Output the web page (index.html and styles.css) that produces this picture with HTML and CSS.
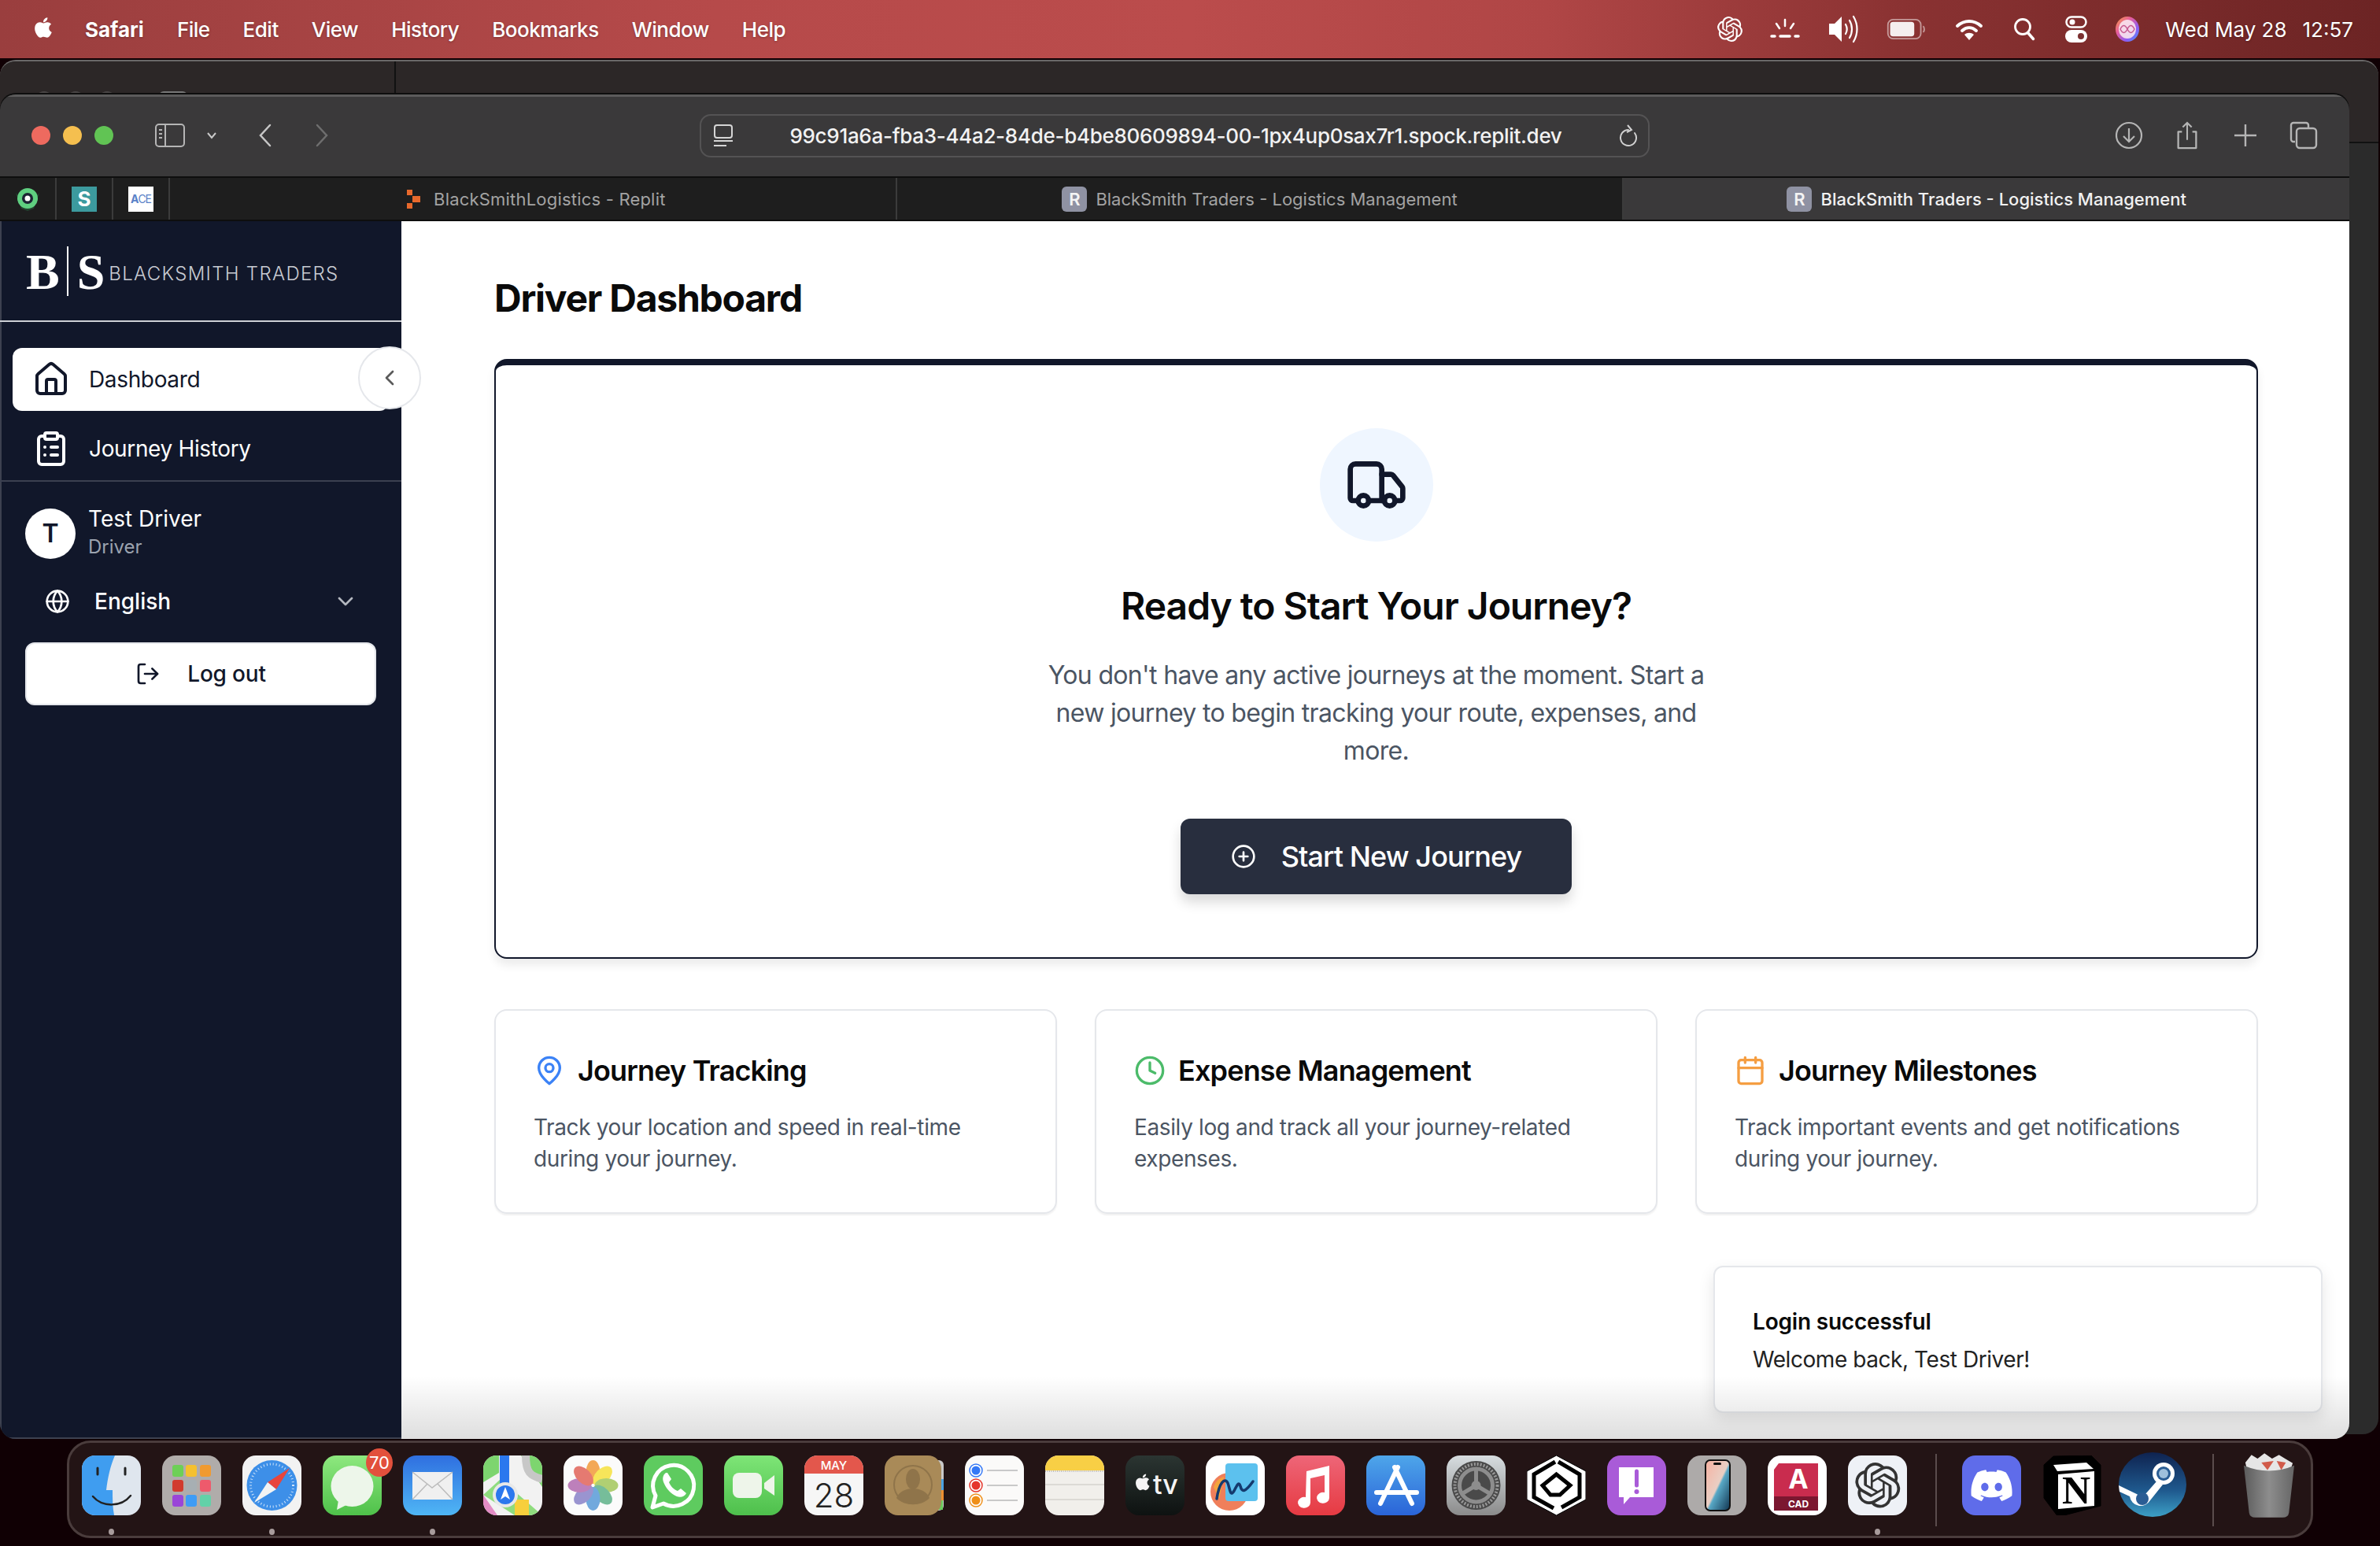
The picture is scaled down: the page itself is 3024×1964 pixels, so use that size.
FILE: index.html
```html
<!DOCTYPE html>
<html lang="en">
<head>
<meta charset="utf-8">
<title>BlackSmith Traders - Logistics Management</title>
<link rel="stylesheet" href="styles.css">
</head>
<body>
<div class="desktop">
  <header class="menubar">
    <svg class="apple" viewBox="0 0 24 24"><path fill="#fff" d="M17.05 20.28c-.98.95-2.05.8-3.08.35-1.09-.46-2.09-.48-3.24 0-1.44.62-2.2.44-3.06-.35C2.79 15.25 3.51 7.59 9.05 7.31c1.35.07 2.29.74 3.08.8 1.18-.24 2.31-.93 3.57-.84 1.51.12 2.65.72 3.4 1.8-3.12 1.87-2.38 5.98.48 7.13-.57 1.5-1.31 2.99-2.54 4.09zM12.03 7.25c-.15-2.23 1.66-4.07 3.74-4.25.29 2.58-2.34 4.5-3.74 4.25z"/></svg>
    <nav class="menu">
      <span class="menu-app">Safari</span><span>File</span><span>Edit</span><span>View</span><span>History</span><span>Bookmarks</span><span>Window</span><span>Help</span>
    </nav>
    <div class="status">
      <svg class="st st-gpt" viewBox="0 0 24 24"><path fill="#fff" d="M22.2819 9.8211a5.9847 5.9847 0 0 0-.5157-4.9108 6.0462 6.0462 0 0 0-6.5098-2.9A6.0651 6.0651 0 0 0 4.9807 4.1818a5.9847 5.9847 0 0 0-3.9977 2.9 6.0462 6.0462 0 0 0 .7427 7.0966 5.98 5.98 0 0 0 .511 4.9107 6.051 6.051 0 0 0 6.5146 2.9001A5.9847 5.9847 0 0 0 13.2599 24a6.0557 6.0557 0 0 0 5.7718-4.2058 5.9894 5.9894 0 0 0 3.9977-2.9001 6.0557 6.0557 0 0 0-.7475-7.0729zm-9.022 12.6081a4.4755 4.4755 0 0 1-2.8764-1.0408l.1419-.0804 4.7783-2.7582a.7948.7948 0 0 0 .3927-.6813v-6.7369l2.02 1.1686a.071.071 0 0 1 .038.052v5.5826a4.504 4.504 0 0 1-4.4945 4.4944zm-9.6607-4.1254a4.4708 4.4708 0 0 1-.5346-3.0137l.142.0852 4.783 2.7582a.7712.7712 0 0 0 .7806 0l5.8428-3.3685v2.3324a.0804.0804 0 0 1-.0332.0615L9.74 19.9502a4.4992 4.4992 0 0 1-6.1408-1.6464zM2.3408 7.8956a4.485 4.485 0 0 1 2.3655-1.9728V11.6a.7664.7664 0 0 0 .3879.6765l5.8144 3.3543-2.0201 1.1685a.0757.0757 0 0 1-.071 0l-4.8303-2.7865A4.504 4.504 0 0 1 2.3408 7.872zm16.5963 3.8558L13.1038 8.364 15.1192 7.2a.0757.0757 0 0 1 .071 0l4.8303 2.7913a4.4944 4.4944 0 0 1-.6765 8.1042v-5.6772a.79.79 0 0 0-.407-.667zm2.0107-3.0231l-.142-.0852-4.7735-2.7818a.7759.7759 0 0 0-.7854 0L9.409 9.2297V6.8974a.0662.0662 0 0 1 .0284-.0615l4.8303-2.7866a4.4992 4.4992 0 0 1 6.6802 4.66zM8.3065 12.863l-2.02-1.1638a.0804.0804 0 0 1-.038-.0567V6.0742a4.4992 4.4992 0 0 1 7.3757-3.4537l-.142.0805L8.704 5.459a.7948.7948 0 0 0-.3927.6813zm1.0976-2.3654l2.602-1.4998 2.6069 1.4998v2.9994l-2.5974 1.4997-2.6067-1.4997Z"/></svg>
      <svg class="st st-bright" viewBox="0 0 38 30"><g stroke="#fff" stroke-width="2.5" stroke-linecap="round"><path d="M19 3v8M8 8l4 6M30 8l-4 6"/><path d="M2 24h4M13 24h12M32 24h4" stroke-width="3.5"/></g></svg>
      <svg class="st st-sound" viewBox="0 0 40 38"><path fill="#fff" d="M2 12h7l9-9v32l-9-9H2z"/><g fill="none" stroke="#fff" stroke-width="2.2" stroke-linecap="round"><path d="M23 13c2 3.500 2 8.500 0 12"/><path d="M28 8c4 6.500 4 15.500 0 22"/><path d="M33 3c6 10 6 22 0 32"/></g></svg>
      <svg class="st st-batt" viewBox="0 0 52 28"><rect x="1" y="1" width="45" height="26" rx="7" fill="none" stroke="#fff" stroke-opacity=".5" stroke-width="2"/><rect x="4" y="4" width="33" height="20" rx="4" fill="#f5eeee"/><path d="M49 10c2 1 2.500 7 0 8" fill="none" stroke="#fff" stroke-opacity=".5" stroke-width="2"/></svg>
      <svg class="st st-wifi" viewBox="0 0 36 28"><g fill="none" stroke="#fff" stroke-width="4" stroke-linecap="round"><path d="M3 10c9-8 21-8 30 0"/><path d="M9 16c5.500-5 12.500-5 18 0"/></g><path fill="#fff" d="M18 28l-6-7c3.500-3 8.500-3 12 0z"/></svg>
      <svg class="st st-search" viewBox="0 0 28 30"><circle cx="12" cy="12" r="9.500" fill="none" stroke="#fff" stroke-width="2.800"/><path d="M18.500 19.500l7 8" stroke="#fff" stroke-width="3.500" stroke-linecap="round"/></svg>
      <svg class="st st-cc" viewBox="0 0 28 34"><rect x="1.500" y="1.500" width="25" height="13" rx="6.500" fill="none" stroke="#fff" stroke-width="2.500"/><circle cx="9" cy="8" r="3.500" fill="#fff"/><rect y="18" width="28" height="16" rx="8" fill="#fff"/><circle cx="20" cy="26" r="4" fill="#7b3030"/></svg>
      <svg class="st st-siri" viewBox="0 0 30 32"><defs><linearGradient id="siri" x1="0" y1="0" x2="1" y2="1"><stop offset="0" stop-color="#f7a13b"/><stop offset=".35" stop-color="#e85d9c"/><stop offset=".7" stop-color="#8b5cf6"/><stop offset="1" stop-color="#3ba7f7"/></linearGradient></defs><ellipse cx="15" cy="16" rx="15" ry="16" fill="url(#siri)"/><ellipse cx="15" cy="16" rx="11" ry="12" fill="#f8e6f0" opacity=".9"/><path d="M6 16c3-6 6-6 9 0s6 6 9 0c-3-6-6-6-9 0s-6 6-9 0z" fill="none" stroke="#c65a90" stroke-width="1.500"/></svg>
      <span class="clock">Wed May 28</span><span class="clock">12:57</span>
    </div>
  </header>

  <div class="back-window">
    <div class="back-toolbar">
      <i class="back-light"></i><i class="back-light"></i><i class="back-light"></i>
      <svg class="back-side" viewBox="0 0 36 30"><rect x="1" y="1" width="34" height="28" rx="5" fill="none" stroke="#777" stroke-width="2"/><path d="M1 10h34" stroke="#777" stroke-width="2"/></svg>
      <span class="back-rule"></span>
      <span class="back-title">ChatGPT</span>
    </div>
  </div>

  <section class="window">
    <div class="toolbar">
      <div class="lights"><i class="light red"></i><i class="light yellow"></i><i class="light green"></i></div>
      <svg class="tb-side" viewBox="0 0 38 30"><rect x="1" y="1" width="36" height="28" rx="4" fill="none" stroke="#b5b5b5" stroke-width="2"/><path d="M13 1v28" stroke="#b5b5b5" stroke-width="2"/><path d="M5 8h4M5 13h4M5 18h4" stroke="#b5b5b5" stroke-width="2"/></svg>
      <svg class="tb-chev" viewBox="0 0 14 10"><path d="M2 2l5 6 5-6" fill="none" stroke="#c9c9c9" stroke-width="2"/></svg>
      <svg class="tb-nav" viewBox="0 0 18 30"><path d="M15 2L3 15l12 13" fill="none" stroke="#c6c6c6" stroke-width="2.500" stroke-linecap="round"/></svg>
      <svg class="tb-nav tb-next" viewBox="0 0 18 30"><path d="M3 2l12 13L3 28" fill="none" stroke="#6e6e6e" stroke-width="2.500" stroke-linecap="round"/></svg>
      <div class="urlbar">
        <svg class="url-ico" viewBox="0 0 24 28"><rect x="1" y="1" width="22" height="16" rx="3" fill="none" stroke="#d5d5d5" stroke-width="2"/><path d="M0 21h24M0 27h16" stroke="#d5d5d5" stroke-width="2"/></svg>
        <span class="url-text">99c91a6a-fba3-44a2-84de-b4be80609894-00-1px4up0sax7r1.spock.replit.dev</span>
        <svg class="url-reload" viewBox="0 0 24 30"><path d="M20 12a10 10 0 1 1-8-4" fill="none" stroke="#d0d0d0" stroke-width="2" stroke-linecap="round"/><path d="M11 2l5 6-6 3" fill="none" stroke="#d0d0d0" stroke-width="2"/></svg>
      </div>
      <div class="tb-actions">
        <svg class="tb-a" viewBox="0 0 36 36"><circle cx="18" cy="18" r="16" fill="none" stroke="#b5b5b5" stroke-width="2.200"/><path d="M18 9v17M11 19l7 7 7-7" fill="none" stroke="#b5b5b5" stroke-width="2.200"/></svg>
        <svg class="tb-a" viewBox="0 0 36 38"><path d="M11 14H6v22h24V14h-5" fill="none" stroke="#b5b5b5" stroke-width="2.400" stroke-linejoin="round"/><path d="M18 25V2M12 8l6-6 6 6" fill="none" stroke="#b5b5b5" stroke-width="2.200"/></svg>
        <svg class="tb-a" viewBox="0 0 36 36"><path d="M18 4v28M4 18h28" stroke="#b5b5b5" stroke-width="2.400"/></svg>
        <svg class="tb-a" viewBox="0 0 36 36"><path d="M7 26H5a3 3 0 0 1-3-3V5a3 3 0 0 1 3-3h16a3 3 0 0 1 3 3v3" fill="none" stroke="#b5b5b5" stroke-width="2.400"/><rect x="9" y="9" width="25" height="25" rx="4" fill="none" stroke="#b5b5b5" stroke-width="2.400"/></svg>
      </div>
    </div>

    <div class="tabbar">
      <div class="pin"><svg class="pin-ico" viewBox="0 0 32 32"><path d="M1 8l7 20 8 3 8-3 7-20-8 9H9z" fill="#2b7a4c" opacity=".4"/><circle cx="16" cy="15" r="13" fill="#5fcf80"/><circle cx="16" cy="15" r="7" fill="#1c2333"/><circle cx="16" cy="15" r="3.500" fill="#fff"/></svg></div>
      <div class="pin"><span class="pin-s">S</span></div>
      <div class="pin"><span class="pin-ace"><b>A</b>CE</span></div>
      <div class="tab tab-first"><svg class="tab-ico-r" viewBox="0 0 20 24"><path fill="#e8692c" d="M1 0h7v7H1zM8 8h10v8H8zM1 17h7v7H1z"/></svg><span>BlackSmithLogistics - Replit</span></div>
      <div class="tab"><span class="tab-ico">R</span><span>BlackSmith Traders - Logistics Management</span></div>
      <div class="tab tab-active"><span class="tab-ico">R</span><span>BlackSmith Traders - Logistics Management</span></div>
    </div>

    <div class="app">
      <aside class="sidebar">
        <div class="brand">
          <span class="brand-mark">B</span><span class="brand-rule"></span><span class="brand-mark">S</span>
          <span class="brand-name">BLACKSMITH TRADERS</span>
        </div>
        <nav class="side-nav">
          <a class="side-item side-item-active">
            <svg class="ico48" viewBox="0 0 24 24"><path d="M15 21v-8a1 1 0 0 0-1-1h-4a1 1 0 0 0-1 1v8"/><path d="M3 10a2 2 0 0 1 .709-1.528l7-5.999a2 2 0 0 1 2.582 0l7 5.999A2 2 0 0 1 21 10v9a2 2 0 0 1-2 2H5a2 2 0 0 1-2-2z"/></svg>
            <span>Dashboard</span>
          </a>
          <a class="side-item">
            <svg class="ico48" viewBox="0 0 24 24"><rect x="8" y="2" width="8" height="4" rx="1"/><path d="M16 4h2a2 2 0 0 1 2 2v14a2 2 0 0 1-2 2H6a2 2 0 0 1-2-2V6a2 2 0 0 1 2-2h2"/><path d="M12 11h4M12 16h4M8 11h.01M8 16h.01"/></svg>
            <span>Journey History</span>
          </a>
        </nav>
        <div class="side-foot">
          <div class="user">
            <span class="avatar">T</span>
            <div class="user-text"><div class="user-name">Test Driver</div><div class="user-role">Driver</div></div>
          </div>
          <div class="lang">
            <svg class="ico32" viewBox="0 0 24 24"><circle cx="12" cy="12" r="10"/><path d="M12 2a14.5 14.5 0 0 0 0 20 14.5 14.5 0 0 0 0-20"/><path d="M2 12h20"/></svg>
            <span class="lang-name">English</span>
            <svg class="ico32 lang-chev" viewBox="0 0 24 24"><path d="m6 9 6 6 6-6"/></svg>
          </div>
          <button class="logout">
            <svg class="ico32" viewBox="0 0 24 24"><path d="M9 21H5a2 2 0 0 1-2-2V5a2 2 0 0 1 2-2h4"/><path d="m16 17 5-5-5-5"/><path d="M21 12H9"/></svg>
            <span>Log out</span>
          </button>
        </div>
        <button class="collapse"><svg class="ico32" viewBox="0 0 24 24"><path d="m15 18-6-6 6-6"/></svg></button>
      </aside>

      <main class="main">
        <h1 class="page-title">Driver Dashboard</h1>
        <section class="hero">
          <div class="hero-badge"><svg class="hero-truck" viewBox="0 0 24 24"><path d="M14 18V6a2 2 0 0 0-2-2H4a2 2 0 0 0-2 2v11a1 1 0 0 0 1 1h2"/><path d="M15 18H9"/><path d="M19 18h2a1 1 0 0 0 1-1v-3.650a1 1 0 0 0-.22-.624l-3.480-4.350A1 1 0 0 0 17.520 8H14"/><circle cx="17" cy="18" r="2"/><circle cx="7" cy="18" r="2"/></svg></div>
          <h2 class="hero-title">Ready to Start Your Journey?</h2>
          <p class="hero-text">You don't have any active journeys at the moment. Start a new journey to begin tracking your route, expenses, and more.</p>
          <button class="cta">
            <svg class="ico32" viewBox="0 0 24 24"><circle cx="12" cy="12" r="10"/><path d="M8 12h8M12 8v8"/></svg>
            <span>Start New Journey</span>
          </button>
        </section>
        <section class="features">
          <article class="feature">
            <h3 class="feature-title"><svg class="ico40 blue" viewBox="0 0 24 24"><path d="M20 10c0 6-8 12-8 12s-8-6-8-12a8 8 0 0 1 16 0Z"/><circle cx="12" cy="10" r="3"/></svg>Journey Tracking</h3>
            <p class="feature-text">Track your location and speed in real-time during your journey.</p>
          </article>
          <article class="feature">
            <h3 class="feature-title"><svg class="ico40 greenc" viewBox="0 0 24 24"><circle cx="12" cy="12" r="10"/><path d="M12 6v6l4 2"/></svg>Expense Management</h3>
            <p class="feature-text">Easily log and track all your journey-related expenses.</p>
          </article>
          <article class="feature">
            <h3 class="feature-title"><svg class="ico40 orange" viewBox="0 0 24 24"><path d="M8 2v4M16 2v4"/><rect x="3" y="4" width="18" height="18" rx="2"/><path d="M3 10h18"/></svg>Journey Milestones</h3>
            <p class="feature-text">Track important events and get notifications during your journey.</p>
          </article>
        </section>
        <div class="toast">
          <div class="toast-title">Login successful</div>
          <div class="toast-text">Welcome back, Test Driver!</div>
        </div>
        <div class="dock-shade"></div>
      </main>
    </div>
  </section>

  <footer class="dock">
    <div class="dock-app"><svg viewBox="0 0 75 76"><rect width="75" height="76" rx="17" fill="#dfe6ee"/><path d="M17 0h25c-6 14-9 28-11 44h8c0 10 0 22 2 32H17A17 17 0 0 1 0 59V17A17 17 0 0 1 17 0z" fill="#3f9df0"/><path d="M20 16v8M55 16v8" stroke="#222" stroke-width="3" stroke-linecap="round"/><path d="M14 52c12 14 36 14 48-1" fill="none" stroke="#222" stroke-width="2.500" stroke-linecap="round"/></svg><i class="dot"></i></div>
    <div class="dock-app"><svg viewBox="0 0 75 76"><rect width="75" height="76" rx="17" fill="#b0acaa"/><g><rect x="13" y="12" width="14" height="15" rx="3" fill="#6dd056"/><rect x="30" y="12" width="14" height="15" rx="3" fill="#f5c02f"/><rect x="48" y="12" width="14" height="15" rx="3" fill="#f09a30"/><rect x="13" y="31" width="14" height="15" rx="3" fill="#d13b2e"/><rect x="30" y="31" width="14" height="15" rx="3" fill="#a7afb3"/><rect x="48" y="31" width="14" height="15" rx="3" fill="#ee5a6c"/><rect x="13" y="50" width="14" height="15" rx="3" fill="#9a45d8"/><rect x="30" y="50" width="14" height="15" rx="3" fill="#3f9cf5"/><rect x="48" y="50" width="14" height="15" rx="3" fill="#62d1a8"/></g></svg></div>
    <div class="dock-app"><svg viewBox="0 0 75 76"><rect width="75" height="76" rx="17" fill="#f2f2f2"/><circle cx="37.500" cy="38" r="32" fill="#3d8fe8"/><circle cx="37.500" cy="38" r="27" fill="none" stroke="#cfe4fa" stroke-width="3" stroke-dasharray="1 3"/><path d="M60 16L32 34l11 9z" fill="#e8453c"/><path d="M15 60l28-17-11-9z" fill="#f3f3f3"/></svg><i class="dot"></i></div>
    <div class="dock-app"><svg viewBox="0 0 75 76"><defs><linearGradient id="msg" x1="0" y1="0" x2="0" y2="1"><stop offset="0" stop-color="#8ee87f"/><stop offset="1" stop-color="#4fc14a"/></linearGradient></defs><rect width="75" height="76" rx="17" fill="url(#msg)"/><ellipse cx="37.500" cy="39" rx="27" ry="26" fill="#edf6ea"/><path d="M20 57l-2 12 14-7z" fill="#edf6ea"/></svg><span class="badge">70</span></div>
    <div class="dock-app"><svg viewBox="0 0 75 76"><defs><linearGradient id="mail" x1="0" y1="0" x2="0" y2="1"><stop offset="0" stop-color="#2f6fe0"/><stop offset="1" stop-color="#4fb6f5"/></linearGradient></defs><rect width="75" height="76" rx="17" fill="url(#mail)"/><rect x="12" y="21" width="51" height="35" rx="2" fill="#f0f0f0"/><path d="M12 21l25 20 26-20M12 56l19-20M63 56L44 36" fill="none" stroke="#bcbcbc" stroke-width="1.500"/></svg><i class="dot"></i></div>
    <div class="dock-app"><svg viewBox="0 0 75 76"><defs><clipPath id="mapclip"><rect width="75" height="76" rx="17"/></clipPath></defs><g clip-path="url(#mapclip)"><rect width="75" height="76" fill="#f2f2f2"/><path d="M48 0h27v40z" fill="#7dd56f"/><path d="M0 0h20v22L0 34z" fill="#7dd56f"/><path d="M22 30L75 76H40L0 50z" fill="#8fdc7e"/><path d="M0 50l18 26H0z" fill="#e38cc5"/><path d="M40 56h18v20H40z" fill="#f7cf3c"/><path d="M21 0h12v36H21z" fill="#2b78ee"/><path d="M54 0c0 22 6 26 21 30" fill="none" stroke="#c7c7c7" stroke-width="10"/><circle cx="28" cy="50" r="16" fill="#e8e8e8"/><circle cx="28" cy="50" r="12" fill="#2b78ee"/><path d="M28 40l6 16-6-4-6 4z" fill="#fff"/></g></svg></div>
    <div class="dock-app"><svg viewBox="0 0 75 76"><rect width="75" height="76" rx="17" fill="#fbfbfb"/><g opacity=".85"><ellipse cx="37.500" cy="21" rx="9" ry="15" fill="#f29a3b"/><ellipse cx="37.500" cy="21" rx="9" ry="15" fill="#f7e23e" transform="rotate(45 37.500 38)"/><ellipse cx="37.500" cy="21" rx="9" ry="15" fill="#a3c85c" transform="rotate(90 37.500 38)"/><ellipse cx="37.500" cy="21" rx="9" ry="15" fill="#5fb38a" transform="rotate(135 37.500 38)"/><ellipse cx="37.500" cy="21" rx="9" ry="15" fill="#5a9bd8" transform="rotate(180 37.500 38)"/><ellipse cx="37.500" cy="21" rx="9" ry="15" fill="#8a83c9" transform="rotate(225 37.500 38)"/><ellipse cx="37.500" cy="21" rx="9" ry="15" fill="#b36bb0" transform="rotate(270 37.500 38)"/><ellipse cx="37.500" cy="21" rx="9" ry="15" fill="#e2645a" transform="rotate(315 37.500 38)"/></g></svg></div>
    <div class="dock-app"><svg viewBox="0 0 75 76"><rect width="75" height="76" rx="17" fill="#5ecb5f"/><path d="M11 66l4-15a26 26 0 1 1 10 10z" fill="none" stroke="#fff" stroke-width="5" stroke-linejoin="round"/><path d="M28 22c-4 3-5 8-2 14 3 7 9 13 16 16 5 2 10 0 12-4l-7-6-4 3c-5-2-9-6-11-11l3-4-5-8z" fill="#fff"/></svg></div>
    <div class="dock-app"><svg viewBox="0 0 75 76"><defs><linearGradient id="ft" x1="0" y1="0" x2="0" y2="1"><stop offset="0" stop-color="#7ee577"/><stop offset="1" stop-color="#4ebf4c"/></linearGradient></defs><rect width="75" height="76" rx="17" fill="url(#ft)"/><rect x="11" y="22" width="37" height="32" rx="8" fill="#eef5ea"/><path d="M51 35l13-10v26L51 42z" fill="#eef5ea"/></svg></div>
    <div class="dock-app"><svg viewBox="0 0 75 76"><rect width="75" height="76" rx="17" fill="#f6f6f6"/><path d="M0 23V17A17 17 0 0 1 17 0h41a17 17 0 0 1 17 17v6z" fill="#e3574c"/><text class="t-may" x="37.500" y="18" text-anchor="middle">MAY</text><text class="t-28" x="37.500" y="66" text-anchor="middle">28</text></svg></div>
    <div class="dock-app"><svg viewBox="0 0 75 76"><rect x="62" y="6" width="13" height="64" rx="6" fill="#c9c9c9"/><rect x="64" y="30" width="11" height="14" fill="#4ba3e3"/><rect x="64" y="44" width="11" height="13" fill="#ee8f30"/><rect x="64" y="57" width="10" height="12" fill="#6acb5d"/><rect width="72" height="76" rx="17" fill="#a98a58"/><circle cx="36" cy="37" r="24" fill="none" stroke="#8f744a" stroke-width="2"/><ellipse cx="36" cy="30" rx="9" ry="13" fill="#8f744a"/><path d="M15 54c6-16 36-16 42 0-10 11-32 11-42 0z" fill="#8f744a"/></svg></div>
    <div class="dock-app"><svg viewBox="0 0 75 76"><rect width="75" height="76" rx="17" fill="#fbfaf9"/><circle cx="14" cy="19" r="8" fill="#fff" stroke="#3478f6" stroke-width="1.500"/><circle cx="14" cy="19" r="5.500" fill="#3478f6"/><circle cx="14" cy="38" r="8" fill="#fff" stroke="#e5352b" stroke-width="1.500"/><circle cx="14" cy="38" r="5.500" fill="#e5352b"/><circle cx="14" cy="57" r="8" fill="#fff" stroke="#ef8f18" stroke-width="1.500"/><circle cx="14" cy="57" r="5.500" fill="#ef8f18"/><path d="M28 19h39M28 38h39M28 57h39" stroke="#c9c9c9" stroke-width="2"/></svg></div>
    <div class="dock-app"><svg viewBox="0 0 75 76"><rect width="75" height="76" rx="17" fill="#f1efeb"/><path d="M0 19V17A17 17 0 0 1 17 0h41a17 17 0 0 1 17 17v2z" fill="#f8cf45"/><path d="M0 20h75" stroke="#bdbab4" stroke-width="2" stroke-dasharray="1 1.500"/><path d="M0 37h75M0 56h75" stroke="#dcdad5" stroke-width="2"/></svg></div>
    <div class="dock-app"><svg viewBox="0 0 75 76"><defs><linearGradient id="tv" x1="0" y1="0" x2="0" y2="1"><stop offset="0" stop-color="#2b3532"/><stop offset="1" stop-color="#0e1211"/></linearGradient></defs><rect width="75" height="76" rx="17" fill="url(#tv)"/><path transform="translate(8 20) scale(1.150)" fill="#f4f4f4" d="M17.05 20.28c-.98.95-2.05.8-3.08.35-1.09-.46-2.09-.48-3.24 0-1.44.62-2.2.44-3.06-.35C2.79 15.25 3.51 7.59 9.05 7.31c1.35.07 2.29.74 3.08.8 1.18-.24 2.31-.93 3.57-.84 1.51.12 2.65.72 3.4 1.8-3.12 1.87-2.38 5.98.48 7.13-.57 1.5-1.31 2.99-2.54 4.09zM12.03 7.25c-.15-2.23 1.66-4.07 3.74-4.25.29 2.58-2.34 4.5-3.74 4.25z"/><text class="t-tv" x="35" y="49">tv</text></svg></div>
    <div class="dock-app"><svg viewBox="0 0 75 76"><rect width="75" height="76" rx="17" fill="#fff"/><circle cx="30" cy="46" r="24" fill="#ef7f5b"/><path d="M10 40a20 20 0 0 1 13-13l-6 28z" fill="#f4a43d"/><rect x="25" y="10" width="41" height="48" rx="4" fill="#5cc1ee"/><path d="M14 55c3-20 10-28 14-20 3 8 3 18 8 10 4-8 6-12 8-6 2 8 6 8 16-6" fill="none" stroke="#143a6e" stroke-width="3.500" stroke-linecap="round"/></svg></div>
    <div class="dock-app"><svg viewBox="0 0 75 76"><defs><linearGradient id="mus" x1="0" y1="0" x2="0" y2="1"><stop offset="0" stop-color="#ee6678"/><stop offset="1" stop-color="#e63a42"/></linearGradient></defs><rect width="75" height="76" rx="17" fill="url(#mus)"/><path d="M26 20l29-7v41a8 7 0 1 1-6-7V25l-18 4v31a8 7 0 1 1-6-7z" fill="#fff"/></svg></div>
    <div class="dock-app"><svg viewBox="0 0 75 76"><defs><linearGradient id="as" x1="0" y1="0" x2="0" y2="1"><stop offset="0" stop-color="#4ea6ea"/><stop offset="1" stop-color="#2a64d8"/></linearGradient></defs><rect width="75" height="76" rx="17" fill="url(#as)"/><g stroke="#fff" stroke-width="6" stroke-linecap="round"><path d="M36 15l22 46M40 15L18 61"/><path d="M13 47h51"/></g></svg></div>
    <div class="dock-app"><svg viewBox="0 0 75 76"><defs><linearGradient id="set" x1="0" y1="0" x2="0" y2="1"><stop offset="0" stop-color="#d7dde0"/><stop offset="1" stop-color="#8b8b8b"/></linearGradient></defs><rect width="75" height="76" rx="17" fill="url(#set)"/><circle cx="37.500" cy="38" r="31" fill="#4a4a4a"/><circle cx="37.500" cy="38" r="27" fill="none" stroke="#999" stroke-width="4" stroke-dasharray="2 2"/><circle cx="37.500" cy="38" r="21" fill="none" stroke="#8d8d8d" stroke-width="5"/><path d="M37.500 38V17M37.500 38L19 49M37.500 38L56 49" stroke="#8d8d8d" stroke-width="5"/><circle cx="37.500" cy="38" r="6" fill="#8d8d8d"/></svg></div>
    <div class="dock-app"><svg viewBox="0 0 75 76"><path d="M37.500 0L75 20v36L37.500 76 0 56V20z" fill="#fff" stroke="#000"/><path d="M40 8L67 24v29L44 66M36 8L9 24v29l25 14M37.500 24L55 38 42 50H30L20 38z" fill="none" stroke="#000" stroke-width="5"/></svg></div>
    <div class="dock-app"><svg viewBox="0 0 75 76"><rect width="75" height="76" rx="17" fill="#a95bd8"/><path d="M16 10h44v38H30l-8 9v-9h-6z" fill="#fff" transform="translate(-1 5)"/><path d="M37.500 20v18" stroke="#a95bd8" stroke-width="5" stroke-linecap="round"/><circle cx="37.500" cy="46" r="3" fill="#a95bd8"/></svg></div>
    <div class="dock-app"><svg viewBox="0 0 75 76"><defs><linearGradient id="ip" x1="0" y1="0" x2="1" y2="1"><stop offset="0" stop-color="#f7b1a1"/><stop offset=".5" stop-color="#e9cfc4"/><stop offset=".55" stop-color="#58a8c6"/><stop offset="1" stop-color="#10334f"/></linearGradient></defs><rect width="75" height="76" rx="17" fill="#adaaa9"/><rect x="23" y="6" width="31" height="64" rx="6" fill="url(#ip)" stroke="#111" stroke-width="2"/><rect x="33" y="9" width="10" height="3" rx="1.500" fill="#111"/></svg></div>
    <div class="dock-app"><svg viewBox="0 0 75 76"><rect width="75" height="76" rx="17" fill="#fff"/><path d="M14 10h50v48H8V18z" fill="#c92c4e"/><rect x="8" y="52" width="56" height="18" fill="#7b1730"/><text class="t-a" x="39" y="42" text-anchor="middle">A</text><text class="t-cad" x="39" y="66" text-anchor="middle">CAD</text></svg></div>
    <div class="dock-app"><svg viewBox="0 0 75 76"><rect width="75" height="76" rx="17" fill="#eef1f6"/><path transform="translate(9 9) scale(2.400)" fill="#333" d="M22.2819 9.8211a5.9847 5.9847 0 0 0-.5157-4.9108 6.0462 6.0462 0 0 0-6.5098-2.9A6.0651 6.0651 0 0 0 4.9807 4.1818a5.9847 5.9847 0 0 0-3.9977 2.9 6.0462 6.0462 0 0 0 .7427 7.0966 5.98 5.98 0 0 0 .511 4.9107 6.051 6.051 0 0 0 6.5146 2.9001A5.9847 5.9847 0 0 0 13.2599 24a6.0557 6.0557 0 0 0 5.7718-4.2058 5.9894 5.9894 0 0 0 3.9977-2.9001 6.0557 6.0557 0 0 0-.7475-7.0729zm-9.022 12.6081a4.4755 4.4755 0 0 1-2.8764-1.0408l.1419-.0804 4.7783-2.7582a.7948.7948 0 0 0 .3927-.6813v-6.7369l2.02 1.1686a.071.071 0 0 1 .038.052v5.5826a4.504 4.504 0 0 1-4.4945 4.4944zm-9.6607-4.1254a4.4708 4.4708 0 0 1-.5346-3.0137l.142.0852 4.783 2.7582a.7712.7712 0 0 0 .7806 0l5.8428-3.3685v2.3324a.0804.0804 0 0 1-.0332.0615L9.74 19.9502a4.4992 4.4992 0 0 1-6.1408-1.6464zM2.3408 7.8956a4.485 4.485 0 0 1 2.3655-1.9728V11.6a.7664.7664 0 0 0 .3879.6765l5.8144 3.3543-2.0201 1.1685a.0757.0757 0 0 1-.071 0l-4.8303-2.7865A4.504 4.504 0 0 1 2.3408 7.872zm16.5963 3.8558L13.1038 8.364 15.1192 7.2a.0757.0757 0 0 1 .071 0l4.8303 2.7913a4.4944 4.4944 0 0 1-.6765 8.1042v-5.6772a.79.79 0 0 0-.407-.667zm2.0107-3.0231l-.142-.0852-4.7735-2.7818a.7759.7759 0 0 0-.7854 0L9.409 9.2297V6.8974a.0662.0662 0 0 1 .0284-.0615l4.8303-2.7866a4.4992 4.4992 0 0 1 6.6802 4.66zM8.3065 12.863l-2.02-1.1638a.0804.0804 0 0 1-.038-.0567V6.0742a4.4992 4.4992 0 0 1 7.3757-3.4537l-.142.0805L8.704 5.459a.7948.7948 0 0 0-.3927.6813zm1.0976-2.3654l2.602-1.4998 2.6069 1.4998v2.9994l-2.5974 1.4997-2.6067-1.4997Z"/></svg><i class="dot"></i></div>
    <span class="dock-sep"></span>
    <div class="dock-app"><svg viewBox="0 0 75 76"><rect width="75" height="76" rx="17" fill="#5f6cea"/><path transform="translate(11.500 12) scale(2.170)" fill="#fff" d="M20.317 4.3698a19.7913 19.7913 0 00-4.8851-1.5152.0741.0741 0 00-.0785.0371c-.211.3753-.4447.8648-.6083 1.2495-1.8447-.2762-3.68-.2762-5.4868 0-.1636-.3933-.4058-.8742-.6177-1.2495a.077.077 0 00-.0785-.037 19.7363 19.7363 0 00-4.8852 1.515.0699.0699 0 00-.0321.0277C.5334 9.0458-.319 13.5799.0992 18.0578a.0824.0824 0 00.0312.0561c2.0528 1.5076 4.0413 2.4228 5.9929 3.0294a.0777.0777 0 00.0842-.0276c.4616-.6304.8731-1.2952 1.226-1.9942a.076.076 0 00-.0416-.1057c-.6528-.2476-1.2743-.5495-1.8722-.8923a.077.077 0 01-.0076-.1277c.1258-.0943.2517-.1923.3718-.2914a.0743.0743 0 01.0776-.0105c3.9278 1.7933 8.18 1.7933 12.0614 0a.0739.0739 0 01.0785.0095c.1202.099.246.1981.3728.2924a.077.077 0 01-.0066.1276 12.2986 12.2986 0 01-1.8732.8914.0766.0766 0 00-.0407.1067c.3604.698.7719 1.3628 1.225 1.9932a.076.076 0 00.0842.0286c1.961-.6067 3.9495-1.5219 6.0023-3.0294a.077.077 0 00.0313-.0552c.5004-5.177-.8382-9.6739-3.5485-13.6604a.061.061 0 00-.0312-.0286zM8.02 15.3312c-1.1825 0-2.1569-1.0857-2.1569-2.419 0-1.3332.9555-2.4189 2.157-2.4189 1.2108 0 2.1757 1.0952 2.1568 2.419 0 1.3332-.9555 2.4189-2.1569 2.4189zm7.9748 0c-1.1825 0-2.1569-1.0857-2.1569-2.419 0-1.3332.9554-2.4189 2.1569-2.4189 1.2108 0 2.1757 1.0952 2.1568 2.419 0 1.3332-.946 2.4189-2.1568 2.4189Z"/></svg></div>
    <div class="dock-app"><svg viewBox="0 0 75 76"><path d="M14 1L62 0l12 12v52L20 78 2 54V12z" fill="#000" stroke="#000"/><path d="M14 12l42-3 9 8-46 3z" fill="#fff"/><path d="M20 24l46-4v44l-46 4z" fill="#fff"/><text class="t-n" x="43" y="61" text-anchor="middle">N</text></svg></div>
    <div class="dock-steam"><svg viewBox="0 0 86 82"><defs><linearGradient id="st" x1="0" y1="0" x2="0" y2="1"><stop offset="0" stop-color="#0f2350"/><stop offset=".6" stop-color="#1f5a8f"/><stop offset="1" stop-color="#3da0c6"/></linearGradient></defs><ellipse cx="43" cy="41" rx="43" ry="41" fill="url(#st)"/><circle cx="57" cy="27" r="14" fill="#fff"/><circle cx="57" cy="27" r="9" fill="#2a5d94"/><circle cx="57" cy="27" r="6" fill="#9fc0dc"/><path d="M0 42l27 13a12 12 0 0 0 7-2l14-16 8 4-16 20a14 14 0 0 1-26-5L1 50z" fill="#fff"/><circle cx="30" cy="59" r="8" fill="#2a5d94"/></svg></div>
    <span class="dock-sep dock-sep-end"></span>
    <div class="dock-trash"><svg viewBox="0 0 68 84"><defs><linearGradient id="tr" x1="0" y1="0" x2="1" y2="0"><stop offset="0" stop-color="#5c5c5c"/><stop offset=".5" stop-color="#8d8d8d"/><stop offset="1" stop-color="#666"/></linearGradient></defs><path d="M3 12l8-10 8 5 9-7 10 7 9-5 8 5 10 6-4 12H6z" fill="#e6e6e6"/><path d="M24 12l8 10 8-12zM44 10l6 12 6-10z" fill="#d15b4a"/><path d="M1 16q33 14 66 0l-7 62q-1 6-8 6H16q-7 0-8-6z" fill="url(#tr)"/></svg></div>
  </footer>
</div>
</body>
</html>
```
FILE: styles.css
```css
* { box-sizing: border-box; }
html, body { margin: 0; padding: 0; }
body { width: 3024px; height: 1964px; overflow: hidden; background: #100003; font-family: Inter, "Liberation Sans", sans-serif; }
.desktop { position: relative; width: 3024px; height: 1964px; background: #100004; overflow: hidden; }

/* menu bar */
.menubar { display: flex; align-items: center; height: 74px; padding: 0 34px 0 38px; color: #fff; font-size: 26px; font-weight: 500; letter-spacing: -.5px; background: linear-gradient(90deg, #9a3e3e 0%, #b64a4a 30%, #bb4c4c 50%, #b04646 65%, #8a3232 80%, #6c2424 100%); }
.apple { width: 34px; height: 38px; margin-right: 36px; margin-top: -4px; }
.menu { display: flex; gap: 42px; text-shadow: 0 1px 3px rgba(0,0,0,.3); }
.menu-app { font-weight: 700; letter-spacing: 0; }
.status { display: flex; align-items: center; margin-left: auto; text-shadow: 0 1px 3px rgba(0,0,0,.3); }
.st { display: block; flex: none; }
.st-gpt { width: 32px; height: 34px; margin-right: 35px; }
.st-bright { width: 38px; height: 30px; margin-right: 35px; }
.st-sound { width: 40px; height: 38px; margin-right: 35px; }
.st-batt { width: 50px; height: 26px; margin-right: 37px; }
.st-wifi { width: 36px; height: 28px; margin-right: 38px; }
.st-search { width: 28px; height: 30px; margin-right: 38px; }
.st-cc { width: 28px; height: 34px; margin-right: 36px; }
.st-siri { width: 30px; height: 32px; margin-right: 33px; }
.clock { font-size: 26px; font-weight: 400; letter-spacing: 0; white-space: nowrap; margin-right: 20px; }
.clock:last-child { margin-right: 0; }

/* windows */
.back-window { position: absolute; left: 0; top: 76px; width: 3022px; height: 1746px; background: #2b2b2b; border-radius: 20px; border-top: 2px solid #6a6868; }
.back-toolbar { position: relative; display: flex; height: 104px; padding: 38px 0 0 44px; gap: 16px; background: #2c2727; border-bottom: 2px solid #111; border-radius: 20px 20px 0 0; color: #8f8c8c; }
.back-light { display: block; width: 24px; height: 24px; border-radius: 50%; background: #4a4646; }
.back-side { width: 36px; height: 30px; margin-left: 38px; }
.back-rule { position: absolute; left: 501px; top: 0; bottom: 0; width: 2px; background: #111; }
.back-title { position: absolute; left: 550px; top: 36px; font-size: 28px; font-weight: 600; }
.window { position: absolute; left: 0; top: 120px; width: 2985px; height: 1708px; display: flex; flex-direction: column; border-radius: 20px; overflow: hidden; background: #3a393a; box-shadow: 0 -2px 0 #0e0e0e; }
.toolbar { display: flex; align-items: center; height: 104px; flex: none; padding: 0 40px 3px 40px; border-top: 3px solid #5c5b5b; }
.lights { display: flex; gap: 16px; margin-right: 53px; }
.light { display: block; width: 24px; height: 24px; border-radius: 50%; }
.red { background: #ee6a5f; }
.yellow { background: #f5bf4f; }
.green { background: #61c454; }
.tb-side { width: 38px; height: 30px; flex: none; }
.tb-chev { width: 14px; height: 10px; margin-left: 27px; flex: none; }
.tb-nav { width: 18px; height: 30px; margin-left: 52px; flex: none; }
.tb-next { margin-left: 54px; }
.urlbar { display: flex; align-items: center; flex: none; width: 1207px; height: 55px; margin-left: 471px; padding: 0 13px 0 16px; border: 2px solid #545354; border-radius: 14px; color: #f2f2f2; font-size: 26px; letter-spacing: -.3px; }
.url-ico { width: 24px; height: 28px; flex: none; }
.url-text { flex: 1; text-align: center; font-weight: 500; white-space: nowrap; }
.url-reload { width: 24px; height: 30px; flex: none; }
.tb-actions { display: flex; align-items: center; gap: 38px; margin-left: auto; }
.tb-a { width: 36px; height: 36px; }
.tabbar { display: flex; height: 57px; flex: none; background: #1e1e1e; border-top: 2px solid #0e0e0e; border-bottom: 2px solid #0e0e0e; color: #a3a3a3; font-size: 22px; }
.pin { display: flex; align-items: center; justify-content: center; width: 72px; border-right: 2px solid #3b3b3b; flex: none; }
.pin-ico { width: 32px; height: 32px; }
.pin-s { width: 32px; height: 32px; background: #3c9a9e; color: #fff; font-weight: 700; font-size: 26px; line-height: 32px; text-align: center; }
.pin-ace { width: 32px; height: 32px; background: #fff; color: #5a82c8; font-size: 14px; line-height: 32px; text-align: center; letter-spacing: -1px; }
.tab { display: flex; align-items: center; justify-content: center; gap: 11px; flex: 1 1 0; min-width: 0; border-right: 2px solid #3b3b3b; white-space: nowrap; }
.tab-first { gap: 15px; letter-spacing: .2px; }
.tab-first .tab-ico-r { margin-left: 8px; }
.tab-active { background: #3a393a; color: #f1f1f1; border-right: 0; font-weight: 500; }
.tab-ico-r { width: 20px; height: 24px; }
.tab-ico { width: 32px; height: 32px; border-radius: 6px; background: #8f92a3; color: #f4f4f4; font-size: 22px; font-weight: 600; line-height: 32px; text-align: center; }

/* app */
.app { display: flex; flex: 1; min-height: 0; }
.sidebar { position: relative; flex: none; width: 510px; background: #11172a; color: #fff; display: flex; flex-direction: column; box-shadow: inset 2px 0 0 #3d4150, inset 0 -2px 0 #3d4150; }
.brand { display: flex; align-items: center; height: 128px; padding: 0 0 0 33px; border-bottom: 2px solid #cdd0d6; }
.brand-mark { font-family: "Liberation Serif", serif; font-weight: 700; font-size: 64px; line-height: 1; margin-top: 4px; }
.brand-rule { width: 2px; height: 63px; background: #fff; margin: 0 11px 0 9px; }
.brand-name { margin-left: 5px; margin-top: 6px; color: #c9ccd3; font-size: 24px; letter-spacing: 1.3px; font-weight: 300; white-space: nowrap; }
.side-nav { display: flex; flex-direction: column; gap: 8px; padding: 33px 16px 0; }
.side-item { display: flex; align-items: center; gap: 24px; height: 80px; padding: 0 25px; border-radius: 12px; font-size: 28px; letter-spacing: -.35px; }
.side-item-active { background: #fff; color: #11172a; width: 478px; }
.ico48 { width: 48px; height: 48px; fill: none; stroke: currentColor; stroke-width: 2; stroke-linecap: round; stroke-linejoin: round; flex: none; }
.ico32 { width: 32px; height: 32px; fill: none; stroke: currentColor; stroke-width: 2; stroke-linecap: round; stroke-linejoin: round; flex: none; }
.ico40 { width: 40px; height: 40px; fill: none; stroke: currentColor; stroke-width: 2; stroke-linecap: round; stroke-linejoin: round; flex: none; }
.side-foot { border-top: 2px solid #3b4050; padding: 33px 32px 0; }
.user { display: flex; align-items: center; gap: 16px; }
.avatar { width: 64px; height: 64px; border-radius: 50%; background: #fff; color: #11172a; font-size: 32px; font-weight: 600; line-height: 64px; text-align: center; flex: none; }
.user-name { font-size: 28px; line-height: 40px; margin-top: -6px; }
.user-role { font-size: 24px; line-height: 32px; color: #9ca3af; }
.lang { display: flex; align-items: center; height: 64px; margin-top: 21px; padding: 0 23px 0 25px; }
.lang-name { margin-left: 31px; font-size: 28px; font-weight: 500; }
.lang-chev { margin-left: auto; color: #b4b8c0; }
.logout { display: flex; align-items: center; justify-content: center; gap: 34px; width: 446px; height: 80px; margin-top: 20px; background: #fff; border: 2px solid #e5e7eb; border-radius: 12px; color: #11172a; font: 500 28px Inter, sans-serif; letter-spacing: -.2px; }
.collapse { position: absolute; left: 455px; top: 159px; width: 80px; height: 80px; display: flex; align-items: center; justify-content: center; background: #fff; border: 2px solid #e5e7eb; border-radius: 50%; color: #5b5b5b; padding: 0; z-index: 2; }

.main { position: relative; flex: 1; background: #fff; padding: 0 116px 0 118px; min-width: 0; overflow: hidden; }
.page-title { margin: 68px 0 0; font-size: 48px; line-height: 60px; font-weight: 700; letter-spacing: -1.25px; color: #0a0a0a; }
.hero { display: flex; flex-direction: column; align-items: center; height: 762px; margin-top: 47px; padding-top: 80px; border: 2px solid #11172a; border-top-width: 8px; border-radius: 16px; box-shadow: 0 8px 12px rgba(0,0,0,.08); }
.hero-badge { display: flex; align-items: center; justify-content: center; width: 144px; height: 144px; border-radius: 50%; background: #eff6ff; color: #11172a; }
.hero-truck { width: 80px; height: 80px; fill: none; stroke: currentColor; stroke-width: 2; stroke-linecap: round; stroke-linejoin: round; }
.hero-title { margin: 54px 0 0; font-size: 48px; line-height: 56px; font-weight: 600; letter-spacing: -1px; color: #0a0a0a; }
.hero-text { width: 896px; margin: 36px 0 0; font-size: 32px; line-height: 48px; letter-spacing: -.67px; color: #4b5563; text-align: center; }
.cta { display: flex; align-items: center; justify-content: center; gap: 32px; width: 497px; height: 96px; margin-top: 62px; background: #282e3e; border: 0; border-radius: 12px; color: #fff; font: 500 36px Inter, sans-serif; letter-spacing: -.9px; box-shadow: 0 10px 16px rgba(0,0,0,.15); }
.features { display: grid; grid-template-columns: repeat(3, 1fr); gap: 48px; margin-top: 64px; }
.feature { height: 260px; padding: 48px; border: 2px solid #e5e7eb; border-radius: 16px; box-shadow: 0 2px 2px rgba(0,0,0,.06); }
.feature-title { display: flex; align-items: center; gap: 16px; margin: 0; height: 56px; font-size: 36px; font-weight: 600; letter-spacing: -.84px; color: #0a0a0a; white-space: nowrap; }
.blue { color: #3b82f6; }
.greenc { color: #4cbb6a; }
.orange { color: #f59e42; }
.feature-text { margin: 24px 0 0; font-size: 28px; line-height: 40px; letter-spacing: -.38px; color: #4b5563; }
.toast { position: absolute; right: 34px; top: 1327px; width: 774px; height: 187px; padding: 49px 48px; background: #fff; border: 2px solid #e5e7eb; border-radius: 12px; box-shadow: 0 8px 20px rgba(0,0,0,.1); z-index: 3; }
.toast-title { font-size: 28px; line-height: 40px; font-weight: 600; letter-spacing: -.2px; color: #0a0a0a; }
.toast-text { font-size: 28px; line-height: 40px; margin-top: 8px; letter-spacing: -.44px; color: #222; }
.dock-shade { position: absolute; left: 0; right: 0; bottom: 0; height: 80px; background: linear-gradient(180deg, rgba(0,0,0,0), rgba(0,0,0,.13)); z-index: 4; }

/* dock */
.dock { position: absolute; left: 85px; top: 1830px; width: 2854px; height: 124px; display: flex; padding: 16px 0 0 16px; gap: 27px; background: #231415; border: 3px solid #4a3c3c; border-radius: 30px; }
.dock-app { position: relative; flex: none; width: 75px; height: 76px; }
.dock-app svg { display: block; width: 75px; height: 76px; }
.dot { position: absolute; left: 34px; top: 93px; width: 7px; height: 8px; border-radius: 50%; background: #a89c9c; }
.badge { position: absolute; right: -14px; top: -9px; width: 34px; height: 36px; border-radius: 50%; background: #e2503c; color: #fff; font-size: 22px; line-height: 36px; text-align: center; }
.dock-sep { flex: none; width: 2px; height: 92px; margin: -2px 5px 0 9px; background: #5a4c4c; }
.dock-sep-end { margin: -2px 5px 0 6px; }
.dock-steam { flex: none; width: 86px; height: 84px; margin: -5px 0 0 -5px; }
.dock-steam svg { display: block; width: 86px; height: 84px; }
.dock-trash { flex: none; width: 66px; height: 86px; margin-top: -5px; margin-left: 5px; }
.dock-trash svg { display: block; width: 66px; height: 86px; }
.t-may { font-size: 15px; font-weight: 500; fill: #fff; }
.t-28 { font-size: 42px; font-weight: 300; fill: #222; }
.t-tv { font-size: 34px; font-weight: 500; fill: #f4f4f4; }
.t-a { font-size: 34px; font-weight: 700; fill: #fff; }
.t-cad { font-size: 12px; font-weight: 700; fill: #fff; }
.t-n { font-family: "Liberation Serif", serif; font-size: 50px; font-weight: 700; fill: #000; }
```
